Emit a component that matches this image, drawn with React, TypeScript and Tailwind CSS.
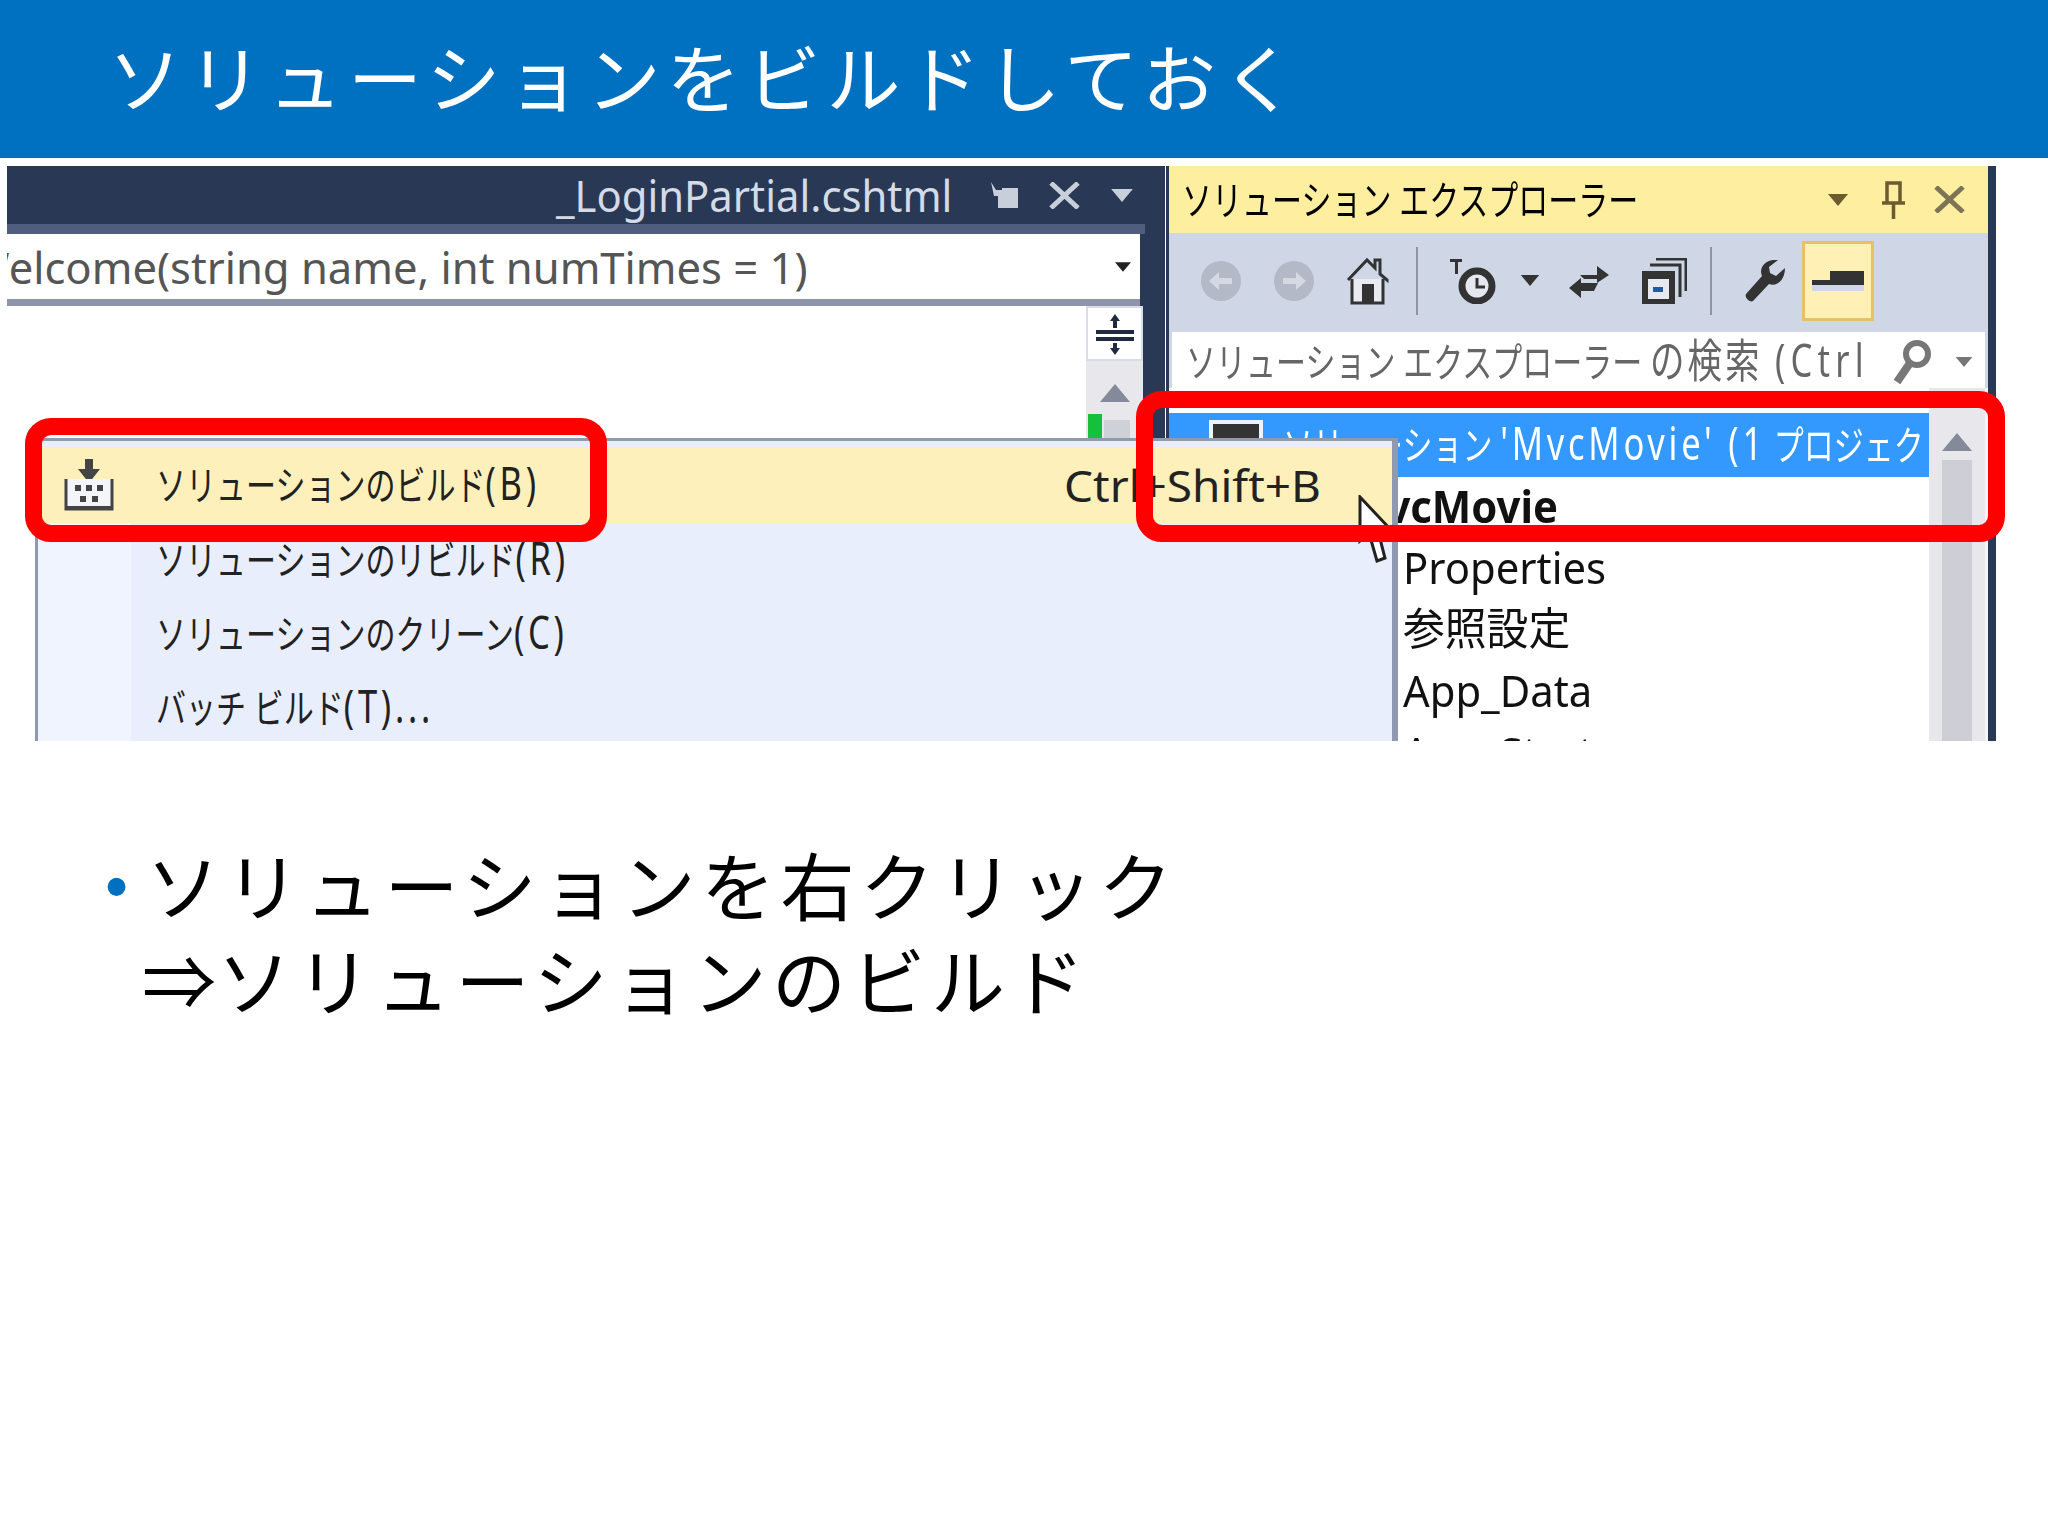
const ideFont = "font-['Noto_Sans','Noto_Sans_CJK_JP',sans-serif]";

// captured IDE text is squeezed kana with wider latin, so latin gets its own bigger run
function Narrow({ children, className = "" }: { children: React.ReactNode; className?: string }) {
  return (
    <span className={`inline-block origin-left scale-x-[0.75] whitespace-nowrap ${className}`}>{children}</span>
  );
}

function Wide({ children, className = "" }: { children: React.ReactNode; className?: string }) {
  return (
    <span className={`inline-block origin-left scale-x-[0.95] whitespace-nowrap text-[44px] ${className}`}>{children}</span>
  );
}

function Latin({ children }: { children: React.ReactNode }) {
  return <span className="text-[46px] tracking-[5px] leading-none">{children}</span>;
}

function Arrow({ className = "", color = "#555" }: { className?: string; color?: string }) {
  return (
    <svg viewBox="0 0 20 12" className={className}>
      <path d="M0 0h20L10 12z" fill={color} />
    </svg>
  );
}

function EditorPane() {
  return (
    <div className="w-[1158px] shrink-0 bg-[#293955] flex flex-col overflow-hidden">
      {/* tab strip */}
      <div className="h-[58px] flex items-center justify-end text-[#d5dbe6] pr-[30px]">
        <div className="w-[395px] mr-[38px]">
          <Wide>_LoginPartial.cshtml</Wide>
        </div>
        <svg viewBox="0 0 32 26" className="w-[32px] h-[26px] mr-[27px]">
          <path d="M2 0l5 8h6V6h16v20H9V14H5z" fill="#c8cfdb" />
        </svg>
        <svg viewBox="0 0 33 27" className="w-[33px] h-[27px] mr-[28px]">
          <path d="M3 1l27 25M30 1L3 26" stroke="#c8cfdb" strokeWidth="5" />
        </svg>
        <Arrow className="w-[26px] h-[13px]" color="#c8cfdb" />
      </div>
      {/* member dropdown */}
      <div className="h-[10px] mr-[20px] bg-[#4f5d7f]" />
      <div className="h-[65px] mr-[25px] bg-white flex items-center justify-between overflow-hidden text-[#555]">
        <Wide className="-ml-[38px] scale-x-[0.99]">Welcome(string name, int numTimes = 1)</Wide>
        <Arrow className="w-[16px] h-[10px] mr-[9px] shrink-0" color="#222" />
      </div>
      <div className="h-[7px] bg-[#8d95ab] mr-[25px]" />
      {/* editor with splitter + scrollbar */}
      <div className="flex-1 mr-[22px] bg-white flex justify-end">
        <div className="w-[57px] bg-[#e8e8ec] flex flex-col">
          <div className="h-[55px] bg-white border-2 border-[#d9dde8] flex items-center justify-center">
            <svg viewBox="0 0 38 44" className="w-[38px] h-[44px]">
              <path d="M0 18h38v4H0zM0 25h38v4H0z" fill="#1f2a40" />
              <path d="M19 2l5 7h-3v7h-4V9h-3zM19 43l5-7h-3v-5h-4v5h-3z" fill="#1f2a40" />
            </svg>
          </div>
          <div className="flex justify-center pt-[23px]">
            <svg viewBox="0 0 30 18" className="w-[30px] h-[18px]">
              <path d="M15 0l15 18H0z" fill="#858a9a" />
            </svg>
          </div>
          <div className="flex mt-[12px] h-[24px] pl-[2px]">
            <div className="w-[14px] bg-[#16c03a]" />
            <div className="w-[26px] ml-[2px] mt-[6px] bg-[#cfd1d8]" />
          </div>
        </div>
      </div>
    </div>
  );
}

function Toolbar() {
  return (
    <div className="h-[95px] bg-[#cfd6e5] flex items-center pl-[32px]">
      <svg viewBox="0 0 40 40" className="w-[40px] h-[40px]">
        <circle cx="20" cy="20" r="20" fill="#b3b9c6" />
        <path d="M8 20l10-9v6h13v6H18v6z" fill="#d5d9e3" />
      </svg>
      <svg viewBox="0 0 40 40" className="w-[40px] h-[40px] ml-[33px]">
        <circle cx="20" cy="20" r="20" fill="#b3b9c6" />
        <path d="M32 20l-10-9v6H9v6h13v6z" fill="#d5d9e3" />
      </svg>
      <svg viewBox="0 0 45 48" className="w-[45px] h-[48px] ml-[31px]">
        <path d="M3 23L22 3l8 8V3h5v14l7 6v-1" fill="none" stroke="#333" strokeWidth="3" />
        <path d="M7 22v24h31V22" fill="#e9ebf0" stroke="#333" strokeWidth="3" />
        <path d="M17 27h12v19H17z" fill="#333" />
      </svg>
      <div className="w-[2px] h-[68px] bg-[#8f95a3] ml-[26px]" />
      <svg viewBox="0 0 46 46" className="w-[46px] h-[46px] ml-[32px]">
        <path d="M0 1h12v3H8v12H5V4H0z" fill="#333" />
        <circle cx="27" cy="28" r="15" fill="#e6e8ef" stroke="#333" strokeWidth="7" />
        <path d="M27 20v9h8" fill="none" stroke="#333" strokeWidth="3" />
      </svg>
      <Arrow className="w-[20px] h-[11px] ml-[24px]" color="#333" />
      <svg viewBox="0 0 42 42" className="w-[42px] h-[42px] ml-[28px]">
        <path d="M12 15h17V6l12 9-12 8v-4H16z" fill="#333" />
        <path d="M30 23H13v-5L1 28l12 10v-7h13z" fill="#333" />
      </svg>
      <svg viewBox="0 0 45 46" className="w-[45px] h-[46px] ml-[32px]">
        <path d="M14 1h30v32M8 7h30v32" fill="none" stroke="#333" strokeWidth="3" />
        <path d="M0 13h33v33H0z" fill="#333" />
        <path d="M6 21h21v20H6z" fill="#e6e9f0" />
        <path d="M11 29h10v5H11z" fill="#1c5da8" />
      </svg>
      <div className="w-[2px] h-[68px] bg-[#8f95a3] ml-[23px]" />
      <svg viewBox="0 0 40 42" className="w-[40px] h-[42px] ml-[33px]">
        <path d="M40 8l-9 8-6-3-1-6 9-7C24-1 17 3 16 11c0 3 1 5 1 5L1 34c-2 3 4 9 7 7l16-17c8 3 16-4 16-16z" fill="#333" />
      </svg>
      <div className="w-[72px] h-[80px] ml-[17px] bg-[#fff0b5] border-[3px] border-[#e5c365] flex items-center justify-center">
        <svg viewBox="0 0 52 20" className="w-[52px] h-[20px]">
          <path d="M18 0h34v14H0V9h18z" fill="#333" />
          <path d="M0 14h52v6H0z" fill="#cfd6e5" />
        </svg>
      </div>
    </div>
  );
}

function SolutionPane() {
  return (
    <div className="flex-1 bg-[#293955] pl-[3px] pr-[8px] ml-[1px] flex flex-col overflow-hidden">
      <div className="w-[819px] flex flex-col flex-1 bg-[#cfd6e5]">
        <div className="h-[67px] bg-[#fdeea0] flex items-center text-black text-[40px] pl-[13px]">
          <div className="w-[640px]">
            <Narrow>ソリューション エクスプローラー</Narrow>
          </div>
          <Arrow className="w-[24px] h-[12px] ml-[4px]" color="#6b5b2e" />
          <svg viewBox="0 0 23 38" className="w-[23px] h-[38px] ml-[32px]">
            <path d="M5 2h13v20H5zM0 22h23M11.5 22v16" fill="none" stroke="#6b5b2e" strokeWidth="3.5" />
          </svg>
          <svg viewBox="0 0 33 27" className="w-[33px] h-[27px] ml-[28px]">
            <path d="M3 1l27 25M30 1L3 26" stroke="#7d7455" strokeWidth="5" />
          </svg>
        </div>
        <Toolbar />
        <div className="h-[4px]" />
        <div className="h-[56px] mx-[3px] bg-white flex items-center text-[#666] text-[40px] pl-[14px] pt-[4px]">
          <div className="w-[710px] overflow-hidden">
            <Narrow>
              ソリューション エクスプローラー <span className="text-[46px] tracking-[4px] leading-none">の検索</span>{" "}
              <span className="text-[46px] tracking-[7px] leading-none ml-[6px]">(Ctrl</span>
            </Narrow>
          </div>
          <svg viewBox="0 0 40 46" className="w-[40px] h-[46px] -ml-[4px]">
            <circle cx="25" cy="15" r="11" fill="none" stroke="#777" strokeWidth="6" />
            <path d="M18 24L5 43" stroke="#777" strokeWidth="8" />
          </svg>
          <Arrow className="w-[20px] h-[10px] ml-[22px]" color="#777" />
        </div>
        {/* tree + scrollbar */}
        <div className="flex-1 bg-white flex overflow-hidden">
          <div className="w-[760px] shrink-0 pt-[25px] text-[#111] text-[40px] overflow-hidden">
            <div className="h-[64px] bg-[#3399ff] flex items-center text-white pl-[40px]">
              <div className="w-[54px] h-[50px] shrink-0 bg-[#333] border-[4px] border-[#eef2fa] mr-[20px]" />
              <Narrow>
                ソリューション <Latin>'MvcMovie' (1</Latin> プロジェクト)
              </Narrow>
            </div>
            <div className="pl-[234px] -mt-[2px] flex flex-col">
              <div className="h-[62px] -ml-[56px] flex items-center font-bold"><Wide>MvcMovie</Wide></div>
              <div className="h-[60px] flex items-center"><Wide>Properties</Wide></div>
              <div className="h-[62px] flex items-center"><Wide>参照設定</Wide></div>
              <div className="h-[62px] flex items-center"><Wide>App_Data</Wide></div>
              <div className="h-[62px] flex items-center"><Wide>App_Start</Wide></div>
            </div>
          </div>
          <div className="w-[56px] bg-[#e8e8ec] flex flex-col items-center pt-[45px]">
            <svg viewBox="0 0 30 18" className="w-[30px] h-[18px]">
              <path d="M15 0l15 18H0z" fill="#858a9a" />
            </svg>
            <div className="w-[30px] flex-1 mt-[9px] bg-[#cdced6]" />
          </div>
          <div className="w-[3px] bg-[#f4f5f8]" />
        </div>
      </div>
    </div>
  );
}

function BuildMenu() {
  return (
    <div className="absolute left-[28px] top-[272px] w-[1363px] h-[303px] bg-[#e9eefc] border-l-[3px] border-r-[6px] border-t-[3px] border-[#8f9ab0] pt-[6px] text-[#222] text-[40px] overflow-hidden">
      <div className="h-[76px] bg-[#fdf0bb] flex items-center">
        <div className="w-[118px] pl-[26px] shrink-0">
          <svg viewBox="0 0 50 52" className="w-[50px] h-[52px]">
            <path d="M21 0h8v10h7L25 24 14 10h7z" fill="#444" />
            <path d="M2 20v30h46V20" fill="#f4f5f8" stroke="#444" strokeWidth="3" />
            <path d="M2 47h46v4H2z" fill="#444" />
            <path d="M11 26h6v6h-6zM22 26h6v6h-6zM33 26h6v6h-6zM16 37h6v6h-6zM28 37h6v6h-6z" fill="#444" />
          </svg>
        </div>
        <div className="w-[908px] shrink-0">
          <Narrow>ソリューションのビルド<Latin>(B)</Latin></Narrow>
        </div>
        <Wide className="scale-x-[1.045]">Ctrl+Shift+B</Wide>
      </div>
      <div className="flex">
        <div className="w-[93px] shrink-0 bg-[#f0f4fe] self-stretch" />
        <div className="flex flex-col pl-[25px]">
          <div className="h-[74px] flex items-center">
            <Narrow>ソリューションのリビルド<Latin>(R)</Latin></Narrow>
          </div>
          <div className="h-[74px] flex items-center">
            <Narrow>ソリューションのクリーン<Latin>(C)</Latin></Narrow>
          </div>
          <div className="h-[74px] flex items-center">
            <Narrow>バッチ ビルド<Latin>(T)...</Latin></Narrow>
          </div>
        </div>
      </div>
    </div>
  );
}

export default function App() {
  return (
    <div className="w-[2048px] h-[1536px] bg-white font-['Noto_Sans_CJK_JP',sans-serif] overflow-hidden">
      <header className="h-[158px] bg-[#0070c0] flex items-center pl-[108px] pb-[10px] text-white text-[74px] tracking-[6px]">
        ソリューションをビルドしておく
      </header>

      <div className={`relative ml-[7px] mt-[8px] w-[2041px] h-[575px] ${ideFont}`}>
        <div className="w-[1989px] h-full flex blur-[0.6px]">
          <EditorPane />
          <SolutionPane />
        </div>
        <BuildMenu />
        {/* mouse cursor */}
        <svg viewBox="0 0 38 70" className="absolute left-[1351px] top-[329px] w-[38px] h-[70px]">
          <path d="M2 2v44l9-8 8 28 8-3-7-27h14z" fill="#fff" stroke="#222" strokeWidth="3" />
        </svg>
        {/* red call-outs */}
        <div className="absolute left-[18px] top-[252px] w-[582px] h-[124px] rounded-[26px] border-[17px] border-[#ff0000]" />
        <div className="absolute left-[1129px] top-[225px] w-[869px] h-[151px] rounded-[26px] border-[17px] border-[#ff0000]" />
      </div>

      <div className="pl-[105px] pt-[94px] flex text-black text-[74px] leading-[95px] tracking-[5.5px]">
        <span className="w-[41px] shrink-0 mt-[4px] text-[#0070c0] text-[66px] tracking-normal font-['Liberation_Sans',sans-serif]">•</span>
        <div>
          <p>ソリューションを右クリック</p>
          <p>
            <span className="-ml-[4px] tracking-[1px]">⇒</span>ソリューションのビルド
          </p>
        </div>
      </div>
    </div>
  );
}
